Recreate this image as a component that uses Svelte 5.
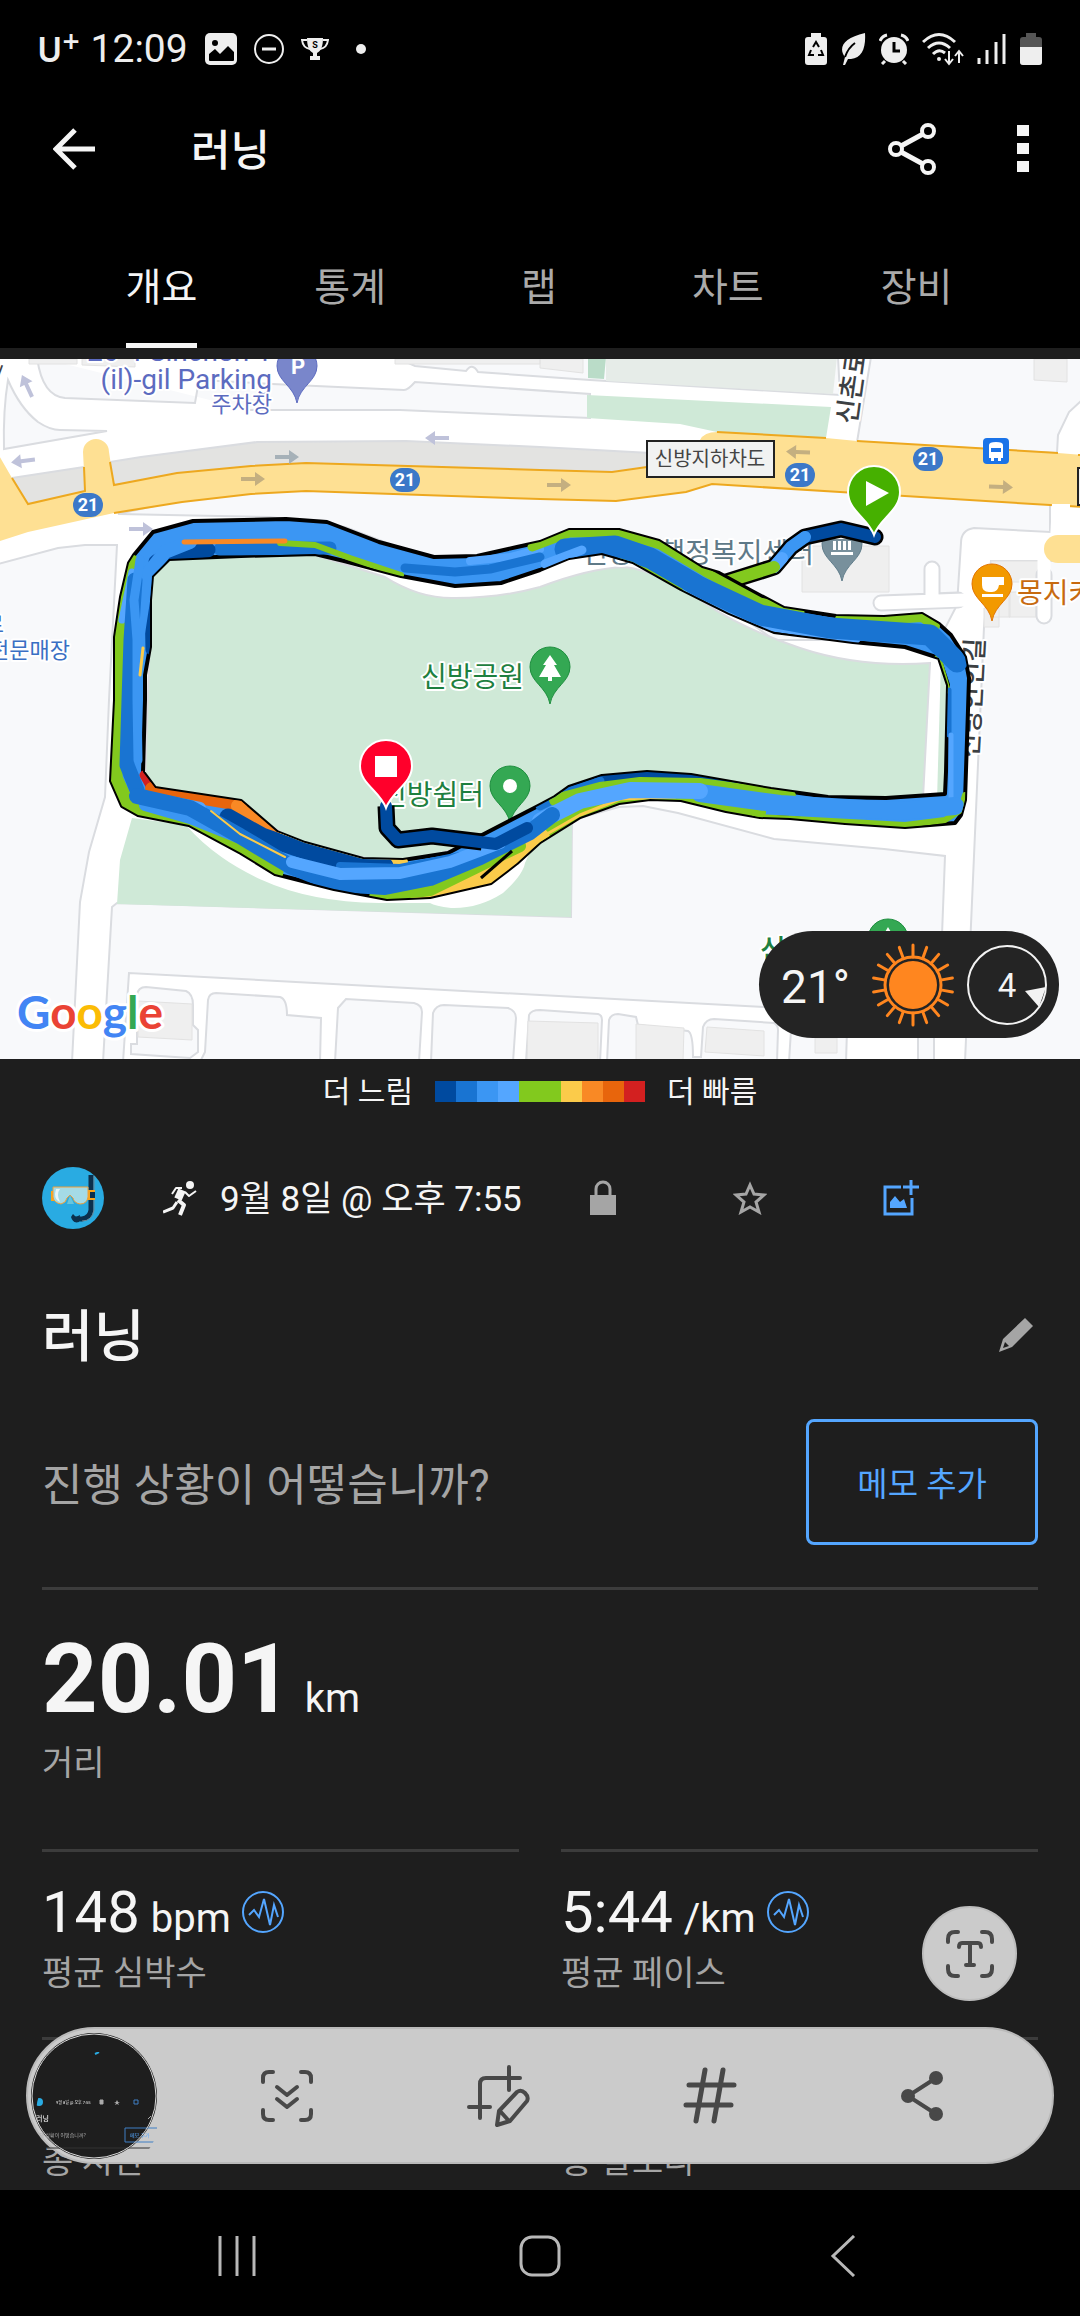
<script>
  const tabs = ['개요', '통계', '랩', '차트', '장비'];
  let active = '개요';

  const paceColors = ['#004a9f', '#1974d2', '#3b96f3', '#54a6ff', '#82c91e', '#82c91e', '#fbcb4a', '#f98925', '#e8650c', '#d32020'];

  const stats = [
    { value: '148', unit: 'bpm', label: '평균 심박수' },
    { value: '5:44', unit: '/km', label: '평균 페이스' },
    { label: '총 시간' },
    { label: '총 칼로리' }
  ];

  const rays = Array.from({ length: 18 }, (_, i) => i * 20);

  const shields = [[88, 505], [405, 480], [800, 475], [928, 459]];

  const arrows = [
    { x: 27, y: 386, r: -115, c: '#bfc2da' },
    { x: 23, y: 461, r: 173, c: '#bfc2da' },
    { x: 141, y: 529, r: 0, c: '#bfc2da' },
    { x: 437, y: 438, r: 180, c: '#bfc2da' },
    { x: 287, y: 457, r: 0, c: '#a6b1b8' },
    { x: 253, y: 479, r: 0, c: '#c4af80' },
    { x: 559, y: 485, r: 0, c: '#c4af80' },
    { x: 798, y: 452, r: 182, c: '#c4af80' },
    { x: 1001, y: 487, r: 2, c: '#c4af80' }
  ];

  const loop =
    'M153 532L193 521 286 519 327 522 379 542 434 557 477 556 517 547 540 542 569 530 619 530 659 541 702 568 719 573 750 590 784 608 836 616 884 617 922 614 939 624 951 635 965 657 969 678 968 710 965 800 961 815 955 823 905 827 845 823 790 818 760 817 726 811 681 800 650 799 619 803 580 817 540 842 517 863 491 883 430 897 387 899 334 889 275 874 241 853 189 825 138 815 122 806 111 781 115 700 115 637 121 597 129 563 134 555Z' +
    'M152 576L169 559 241 556 315 554 344 561 401 576 455 586 501 583 540 570 569 558 602 553 633 562 681 589 729 613 774 632 822 638 853 642 905 647 939 658 948 685 946 772 945 794 886 798 828 797 771 789 691 775 647 772 602 776 569 787 555 797 540 805 482 835 448 853 403 860 363 859 305 843 277 832 241 801 155 788 143 772 145 700 145 675 150 647 150 600Z';

  // pace segments painted inside the loop: [colour, width, points]
  const segments = [
    ['#82c91e', 17, '131,563 119,640 119,700 114,778 126,804 140,811 189,822 275,872'],
    ['#004a9f', 9, '156,570 149,600 150,650'],
    ['#1974d2', 13, '220,549 330,548'],
    ['#004a9f', 15, '156,562 170,553 208,550'],
    ['#82c91e', 6, '280,543 315,545 350,558 401,575'],
    ['#3b96f3', 14, '190,542 165,552 147,575 137,640 134,700'],
    ['#f98925', 5, '184,542 285,541'],
    ['#54a6ff', 7, '132,572 122,620'],
    ['#1974d2', 15, '135,580 131,640 129,700 127,765 137,790'],
    ['#3b96f3', 9, '140,560 134,600 137,640 137,700 138,760'],
    ['#fbcb4a', 3, '143,648 140,675'],
    ['#54a6ff', 8, '470,561 510,557 540,549'],
    ['#1974d2', 9, '405,568 455,572 490,569 540,557'],
    ['#82c91e', 9, '532,547 569,533 619,533 660,545 705,572 760,602 800,612'],
    ['#82c91e', 13, '625,558 684,587'],
    ['#54a6ff', 12, '688,592 770,625 855,638'],
    ['#82c91e', 10, '840,619 890,619 922,617 935,626'],
    ['#82c91e', 7, '938,658 947,690'],
    ['#1974d2', 21, '565,549 615,546 650,558 700,587 760,615 830,628 930,635 957,662'],
    ['#54a6ff', 9, '545,564 582,550'],
    ['#1974d2', 5, '949,690 949,735'],
    ['#54a6ff', 5, '951,735 951,800'],
    ['#004a9f', 13, '600,780 647,775 691,779 740,790'],
    ['#1974d2', 9, '540,806 570,791 600,781'],
    ['#82c91e', 12, '555,800 600,788 640,783 700,784 790,796'],
    ['#82c91e', 12, '530,842 580,812 620,798 690,797 740,809 760,812'],
    ['#82c91e', 6, '755,817 905,825 945,820 961,810 965,795'],
    ['#fbcb4a', 3, '540,838 580,815 620,799 675,797'],
    ['#3b96f3', 18, '700,793 780,804 900,811 955,806'],
    ['#54a6ff', 16, '540,821 580,801 630,790 700,791'],
    ['#d32020', 9, '144,775 152,789'],
    ['#e8650c', 14, '152,789 240,804'],
    ['#f98925', 14, '238,806 282,835'],
    ['#fbcb4a', 10, '282,836 330,852 403,862'],
    ['#fbcb4a', 20, '420,895 490,876 540,838'],
    ['#82c91e', 12, '375,897 430,890 475,868 520,846'],
    ['#54a6ff', 12, '160,800 200,808'],
    ['#004a9f', 17, '228,817 262,836 320,856 385,866'],
    ['#1974d2', 8, '340,866 400,868 460,856'],
    ['#3b96f3', 12, '145,805 190,818 240,838'],
    ['#1974d2', 16, '137,796 190,808 240,836 290,866 335,884 385,887 430,878 480,857 530,832 552,815'],
    ['#54a6ff', 12, '292,862 340,874 400,873 450,862 500,843'],
    ['#fbcb4a', 2, '211,811 240,834 285,857']
  ];
</script>

{#snippet pulse()}
  <svg class="pulse" viewBox="0 0 42 42" fill="none" stroke="#54a6ff" aria-hidden="true">
    <circle cx="21" cy="21" r="20" stroke-width="2" />
    <path d="M7 24l5-5 5 7 5-18 6 26 4-20 4 12" stroke-width="2" />
  </svg>
{/snippet}

{#snippet pin(x, y, fill, edge)}
  <path transform="translate({x} {y})" d="M0 37C-3 20-20 15-20 0A20 20 0 0 1 20 0C20 15 3 20 0 37Z" {fill} stroke={edge} stroke-width="1" />
{/snippet}

<div class="screen">
  <header>
    <div class="status">
      <div class="status-left">
        <span class="carrier">U<sup>+</sup></span>
        <time>12:09</time>
        <svg width="32" height="32" viewBox="0 0 32 32" aria-hidden="true">
          <rect width="32" height="32" rx="5" fill="#eee" />
          <path d="M4 27v-6l6-5 5 5 8-8 6 6v8q0 1-1 1H5q-1 0-1-1z" fill="#000" />
          <circle cx="10" cy="10" r="3" fill="#000" />
        </svg>
        <svg width="30" height="30" viewBox="0 0 30 30" fill="none" stroke="#eee" stroke-width="2" aria-hidden="true">
          <circle cx="15" cy="15" r="14" /><path d="M8 15h14" stroke-width="3" />
        </svg>
        <svg width="28" height="24" viewBox="0 0 28 24" aria-hidden="true">
          <path d="M6 1h16c0 8-2 13-6 15v3h3v4H9v-4h3v-3C8 14 6 9 6 1z" fill="#eee" />
          <path d="M6 3H1q1 8 8 9M22 3h5q-1 8-8 9" fill="none" stroke="#eee" stroke-width="2" />
          <text x="14" y="11" text-anchor="middle" font-size="9" font-weight="700" fill="#000">S</text>
        </svg>
        <svg class="dot" width="10" height="10" viewBox="0 0 10 10" aria-hidden="true"><circle cx="5" cy="5" r="5" fill="#eee" /></svg>
      </div>
      <div class="status-right">
        <svg width="22" height="34" viewBox="0 0 22 34" aria-hidden="true">
          <path d="M6 1h10v4h3q3 0 3 3v22q0 3-3 3H3q-3 0-3-3V8q0-3 3-3h3z" fill="#eee" />
          <path d="M8 15l3-5 3 5M16 18l2 5h-5M9 23H4l2-5" fill="none" stroke="#000" stroke-width="2" />
        </svg>
        <svg width="26" height="34" viewBox="0 0 26 34" aria-hidden="true">
          <path d="M25 1c1 15-3 25-14 26H8l-3 6H3l2-8C-2 16 3 6 25 1z" fill="#eee" />
          <path d="M5 25q3-9 10-14" fill="none" stroke="#000" stroke-width="2" />
        </svg>
        <svg width="30" height="32" viewBox="0 0 30 32" aria-hidden="true">
          <circle cx="15" cy="17" r="13" fill="#eee" />
          <path d="M15 9v9h6" fill="none" stroke="#000" stroke-width="3" />
          <path d="M1 8q2-5 7-6M29 8q-2-5-7-6M6 28l-3 3M24 28l3 3" fill="none" stroke="#eee" stroke-width="3" />
        </svg>
        <svg width="42" height="34" viewBox="0 0 42 34" fill="none" stroke="#eee" stroke-width="3" aria-hidden="true">
          <path d="M1 10Q17-5 33 10M6 16q11-10 22 0M11 22q6-6 12-1" />
          <circle cx="17" cy="27" r="2" fill="#eee" stroke="none" />
          <path d="M27 19v12M23 27l4 5 4-5M37 31V20M33 24l4-5 4 5" stroke-width="2" />
        </svg>
        <svg width="30" height="32" viewBox="0 0 30 32" stroke="#eee" stroke-width="3" aria-hidden="true">
          <path d="M2 31v-6M10 31V17M19 31V9M27 31V1" />
        </svg>
        <svg width="22" height="34" viewBox="0 0 22 34" aria-hidden="true">
          <path d="M6 1h10v4h3q3 0 3 3v22q0 3-3 3H3q-3 0-3-3V8q0-3 3-3h3z" fill="#555" />
          <path d="M0 15h22v15q0 3-3 3H3q-3 0-3-3z" fill="#eee" />
        </svg>
      </div>
    </div>

    <div class="appbar">
      <button class="icon" aria-label="뒤로">
        <svg width="42" height="42" viewBox="0 0 42 42" fill="none" stroke="#f5f5f5" stroke-width="5"><path d="M42 21H4M22 2L3 21l19 19" /></svg>
      </button>
      <h1>러닝</h1>
      <button class="icon" aria-label="공유">
        <svg width="50" height="54" viewBox="0 0 50 54" fill="none" stroke="#f5f5f5" stroke-width="4">
          <circle cx="41" cy="9" r="6" /><circle cx="9" cy="27" r="6" /><circle cx="41" cy="45" r="6" />
          <path d="M14 24l22-12M14 30l22 12" stroke-width="5" />
        </svg>
      </button>
      <button class="icon" aria-label="더보기">
        <svg width="12" height="48" viewBox="0 0 12 48" fill="#f5f5f5"><path d="M0 0h12v11H0zM0 18h12v11H0zM0 36h12v11H0z" /></svg>
      </button>
    </div>

    <nav class="tabs">
      {#each tabs as tab}
        <button class:active={tab === active} on:click={() => (active = tab)}>{tab}</button>
      {/each}
    </nav>
  </header>

  <main>
    <section class="map">
      <svg class="canvas" viewBox="0 359 1080 700" role="img" aria-label="경로 지도">
        <defs><clipPath id="loop"><path d={loop} clip-rule="evenodd" /></clipPath></defs>
        <rect y="359" width="1080" height="700" fill="#fff" />

        <g fill="#f8f9fb" stroke="#dadce0" stroke-width="2">
          <path d="M-2 564L58 548 85 545 117 545 109 700 105 797 89 852 80 902 72 1062H-2Z" />
          <path d="M112 907L117 903 571 917 572 820 619 807 643 806 678 813 774 839 884 849 945 856 939 1014 764 1007 540 995 129 973 123 1062H103Z" />
          <path d="M118 514L270 480H1050V532L974 528Q961 530 961 543L957 605 939 640H774L705 590 620 550H569L477 560 434 558 395 546 345 527 270 517Z" />
          <path d="M991 561H1082V1062H965L984 627Z" />
          <path d="M871 357L857 442 1057 453 1058 435 1069 412 1082 400V357Z" />
          <path d="M37 357Q42 396 65 398L195 403 199 380 272 384 404 390Q408 390 415 382L590 394V418L540 416 400 410H250" />
          <path d="M395 357L415 366 466 371Q472 362 478 372L590 380 840 395 838 357Z" />
          <path d="M8 380Q20 408 38 422 50 430 60 430L107 431 4 449Q3 410 8 380Z" />
          <path d="M131 1054V1044L137 1044V995Q138 987 146 987L186 991Q193 994 193 1005V1025L198 1030V1052L190 1058Z" />
          <path d="M200 1062L205 1052 208 1000Q209 993 216 993L280 997Q287 999 287 1015L321 1018 320 1062Z" />
          <path d="M335 1062L338 1008 346 999 414 1003Q422 1005 422 1012L419 1062Z" />
          <path d="M431 1062L433 1013Q436 1005 444 1005L508 1008Q516 1011 516 1018L513 1062Z" />
          <path d="M526 1062L529 1015Q531 1010 540 1010L598 1014Q602 1015 602 1020L600 1062Z" />
          <path d="M607 1062L609 1020Q611 1014 618 1014L636 1017 638 1025 688 1031Q693 1033 693 1057H701L703 1027Q706 1019 714 1019L774 1023Q778 1025 778 1030L777 1062Z" />
          <path d="M789 1062L791 1030H847L846 1062ZM918 1062V1020H934V1062Z" />
        </g>
        <path d="M606 357H837L833 394 606 381Z" fill="#e6ece8" />
        <path d="M588 357H606L604 379 588 378Z" fill="#badcc8" />
        <path d="M587 395L831 407 826 438 717 432 680 424 587 418Z" fill="#cfe9d7" />

        <g fill="#efefef" stroke="#e2e2e2">
          <path d="M29 359H77V364H29ZM82 359H135V367L82 365ZM395 359H540V364H395ZM540 359H583V373L540 368ZM1034 359H1067V382L1034 380Z" />
          <path d="M802 546H889V592H802ZM991 561H1042V582H1010V617H991V600ZM1009 592H1036V617H1009ZM984 608H999V627H984Z" />
          <path d="M138 1001L192 1004V1040L138 1037ZM528 1021L598 1023V1062H527ZM636 1024L684 1028 683 1062H636ZM707 1027L764 1031V1056L705 1052ZM815 1038H837V1053H815Z" />
        </g>
        <g fill="none" stroke-linecap="round">
          <path d="M932 569V600M881 603L958 600M1044 575V616" stroke="#dadce0" stroke-width="17" />
          <path d="M932 569V600M881 603L965 600M1044 560V616" stroke="#fff" stroke-width="13" />
        </g>

        <!-- park -->
        <path d="M152 572L170 555H315L385 577Q420 599 455 598 500 598 540 587 590 568 625 567 660 572 700 600T800 648 930 663L923 798H828L690 780H600L482 840 403 865 300 845 240 805 145 785Z" fill="#cfe9d7" stroke="#dadce0" stroke-width="2" />
        <path d="M941 660H950V800H937Z" fill="#cfe9d7" />
        <path d="M132 818L120 860 117 904 571 917 572 822 540 830 525 863Q523 875 503 893 478 909 451 908 435 906 430 903L379 903Q310 902 262 880T186 825Z" fill="#cfe9d7" />

        <!-- highway -->
        <path d="M12 478L84 467 110 462 141 457 257 442 406 441 540 447 650 453V480H300L114 490 28 506Z" fill="#e3e3e1" stroke="#dadce0" stroke-width="2" />
        <path d="M-3 452L12 478 28 504 85 491 83 452A13 13 0 0 1 109 452L114 485 177 473 251 466 306 463 540 470 612 472 647 467 700 440Q704 432 717 432L826 438 857 441 1058 453 1083 455V507L1050 505 840 492 712 484 686 492 616 501 540 499 306 491 251 494 182 502 114 513 28 532-3 542Z" fill="#fee093" />
        <path d="M12 478L28 504 85 491 84 467M110 462L114 485 177 473 251 466 306 463 540 470 612 472 647 467M717 432L826 438M857 441L1058 453M1078 455H1083M1083 507L1050 505 840 492 712 484 686 492 616 501 540 499 306 491 251 494 182 502 114 513" fill="none" stroke="#eda81f" stroke-width="2" />
        <path d="M1052 504H1070V540H1050Z" fill="#fff" />
        <path d="M1082 535H1058A14 14 0 0 0 1058 563H1082Z" fill="#fee093" />

        {#each arrows as a}
          <path transform="translate({a.x} {a.y}) rotate({a.r})" d="M-12-2H2V-7L12 0 2 7V2H-12Z" fill={a.c} />
        {/each}
        {#each shields as [x, y]}
          <rect x={x - 15} y={y - 12} width="30" height="24" rx="12" fill="#3c78c8" />
          <text {x} y={y + 6} class="shield">21</text>
        {/each}
        <rect x="1078" y="468" width="20" height="37" fill="#f1f1f1" stroke="#222" stroke-width="2" />
        <rect x="647" y="441" width="127" height="36" fill="#f1f2f2" stroke="#222" stroke-width="2" />
        <text x="710" y="466" text-anchor="middle" font-size="20" fill="#444">신방지하차도</text>
        <rect x="983" y="438" width="26" height="26" rx="4" fill="#1a73e8" />
        <path d="M989 445q0-3 7-3t7 3v13h-2v3h-3v-3h-4v3h-3v-3h-2z" fill="#fff" />
        <path d="M991 448h10v4h-10z" fill="#1a73e8" />

        <g class="labels">
          <text x="272" y="361" text-anchor="end" font-size="28" fill="#5c6bc0">26-4 Sinchon 1</text>
          <text x="272" y="389" text-anchor="end" font-size="28" fill="#5c6bc0">(il)-gil Parking</text>
          <text x="272" y="412" text-anchor="end" font-size="22" fill="#5c6bc0">주차장</text>
          <text x="4" y="632" text-anchor="end" font-size="22" fill="#3a6fc4">로</text>
          <text x="70" y="658" text-anchor="end" font-size="22" fill="#3a6fc4">전문매장</text>
          <text x="524" y="687" text-anchor="end" font-size="28" fill="#1e8040">신방공원</text>
          <text x="484" y="805" text-anchor="end" font-size="28" fill="#1e8040">신방쉼터</text>
          <text x="814" y="563" text-anchor="end" font-size="28" fill="#5f7a88">신방동행정복지센터</text>
          <text x="1017" y="603" font-size="28" fill="#c76a10">몽지카페</text>
          <text x="760" y="960" font-size="28" font-weight="500" fill="#1e8040">신</text>
          <text transform="translate(856 425) rotate(-82)" font-size="27" font-weight="500" fill="#3c4043">신촌로</text>
          <text transform="translate(978 758) rotate(-87)" font-size="26" font-weight="500" fill="#3c4043">신방안인길</text>
          <text transform="translate(-6 385) rotate(-70)" font-size="26" fill="#3c4043">길</text>
        </g>

        {@render pin(297, 366, '#7986cb', '#5c6bc0')}
        <text x="298" y="374" class="pin-letter">P</text>
        {@render pin(550, 667, '#34a853', '#1e8e3e')}
        <path d="M550 655l7 10h-3l7 12h-9v4h-4v-4h-9l7-12h-3z" fill="#fff" />
        {@render pin(510, 786, '#34a853', '#1e8e3e')}
        <circle cx="510" cy="786" r="7" fill="#fff" />
        {@render pin(842, 544, '#78909c', '#607d8b')}
        <path d="M832 539l10-6 10 6zM833 541h3v9h-3zM838 541h3v9h-3zM843 541h3v9h-3zM848 541h3v9h-3zM831 552h22v3h-22z" fill="#fff" />
        {@render pin(992, 584, '#f29900', '#e37400')}
        <path d="M982 577h22v8h-5q-1 7-7 7h-3q-7 0-7-7zM982 594h21v3h-21z" fill="#fff" />
        {@render pin(888, 939, '#34a853', '#1e8e3e')}
        <path d="M888 927l7 12h-14z" fill="#fff" />

        <!-- run -->
        <g fill="none" stroke-linejoin="round" stroke-linecap="round">
          <polyline points="726,582 774,567 791,547 805,537 841,529 875,537" stroke="#000" stroke-width="17" />
          <polyline points="805,537 841,529 875,537" stroke="#004a9f" stroke-width="12" />
          <polyline points="774,567 791,547 805,537" stroke="#3b96f3" stroke-width="12" />
          <polyline points="774,567 782,558" stroke="#54a6ff" stroke-width="12" />
          <polyline points="726,582 774,567" stroke="#82c91e" stroke-width="12" />
        </g>
        <path d={loop} fill="#3b96f3" fill-rule="evenodd" stroke="#000" stroke-width="4" stroke-linejoin="round" />
        <g clip-path="url(#loop)" fill="none" stroke-linejoin="round" stroke-linecap="round">
          {#each segments as [color, width, points]}
            <polyline {points} stroke={color} stroke-width={width} />
          {/each}
        </g>
        <path d="M481 878L512 851" stroke="#000" stroke-width="3" />
        <g fill="none" stroke-linejoin="round">
          <polyline points="386,806 387,828 398,840 432,836 482,842" stroke="#000" stroke-width="17" />
          <polyline points="386,806 387,828 398,840 432,836 496,844 527,828" stroke="#004a9f" stroke-width="12" stroke-linecap="round" />
        </g>

        <path d="M874 535C868 518 848 511 848 492A26 26 0 0 1 900 492C900 511 880 518 874 535Z" fill="#46b000" stroke="#fff" stroke-width="2" />
        <path d="M866 481L889 493 866 506Z" fill="#fff" />
        <path d="M386 808C380 791 360 784 360 766A26 26 0 0 1 412 766C412 784 392 791 386 808Z" fill="#ff002b" stroke="#fff" stroke-width="2" />
        <path d="M375 756H397V777H375Z" fill="#fff" />

        <text x="17" y="1029" class="google"><tspan fill="#4285f4">G</tspan><tspan fill="#ea4335">o</tspan><tspan fill="#fbbc05">o</tspan><tspan fill="#4285f4">g</tspan><tspan fill="#34a853">l</tspan><tspan fill="#ea4335">e</tspan></text>
      </svg>

      <div class="weather">
        <span class="temp">21°</span>
        <svg width="84" height="84" viewBox="-42 -42 84 84" aria-hidden="true">
          <circle r="24" fill="#ff861f" />
          <circle r="28" fill="none" stroke="#ff861f" stroke-width="3" />
          {#each rays as r}<path d="M0-28V-40" stroke="#ff861f" stroke-width="3" stroke-linecap="round" transform="rotate({r})" />{/each}
        </svg>
        <svg width="82" height="82" viewBox="-41 -41 82 82" aria-hidden="true">
          <circle r="39" fill="none" stroke="#f3f3f3" stroke-width="2" />
          <path d="M18 6L39 2 32 22Z" fill="#f3f3f3" />
          <text x="0" y="12" text-anchor="middle" font-size="33" fill="#f3f3f3">4</text>
        </svg>
      </div>
    </section>

    <div class="legend">
      <span>더 느림</span>
      <div class="scale">{#each paceColors as c}<i style="background: {c}"></i>{/each}</div>
      <span>더 빠름</span>
    </div>

    <div class="body">
      <div class="meta">
        <svg class="avatar" viewBox="0 0 62 62" aria-hidden="true">
          <circle cx="31" cy="31" r="31" fill="#29abe2" />
          <path d="M49 8V43Q48 51 40 52H32" fill="none" stroke="#0b304d" stroke-width="5" />
          <path d="M29 50l2-3 3 3 4-2-1 7q-6 2-8-5z" fill="#0b304d" />
          <path d="M52 9V43Q50 54 40 54" fill="none" stroke="#6d8795" stroke-width="1" />
          <path d="M9 24h4v10h-4zM45 23h8v10h-8z" fill="#f7a51b" />
          <path d="M48 25h5v6h-5z" fill="#0b304d" />
          <path d="M11 20H46V30Q45 37 38 37 32 36 31 31L28 28 25 31Q24 36 19 37 12 36 11 30Z" fill="#a5dbe6" stroke="#ef9f38" stroke-width="1" />
          <path d="M14 22H18Q14 27 18 35 13 33 13 27Z" fill="#e5f5f8" />
          <path d="M28 28l4 9h-7z" fill="#67c5dd" />
        </svg>
        <svg class="runner" width="34" height="36" viewBox="0 0 34 36" fill="none" stroke="#f5f5f5" stroke-linejoin="round" aria-hidden="true">
          <circle cx="27" cy="5" r="4" fill="#f5f5f5" stroke="none" />
          <path d="M19 10L15 19" stroke-width="8" />
          <path d="M19 8H13L9 14M22 12l4 4 7-5" stroke-width="2" />
          <path d="M15 20l6 5-4 10" stroke-width="4" />
          <path d="M14 22l-4 6-10 4" stroke-width="3" />
        </svg>
        <span class="date">9월 8일 @ 오후 7:55</span>
        <div class="actions">
          <button class="icon" aria-label="공개 범위">
            <svg width="28" height="36" viewBox="0 0 28 36"><path d="M1 15h26v20H1z" fill="#a5a5a5" /><path d="M7 16V9a7 7 0 0 1 14 0v7" fill="none" stroke="#a5a5a5" stroke-width="3" /></svg>
          </button>
          <button class="icon" aria-label="즐겨찾기">
            <svg width="34" height="34" viewBox="0 0 34 34" fill="none" stroke="#a5a5a5" stroke-width="3"><path d="M17 4l4 9 10 1-8 7 3 10-9-5-9 5 3-10-8-7 10-1z" /></svg>
          </button>
          <button class="icon" aria-label="사진 추가">
            <svg width="36" height="36" viewBox="0 0 36 36" fill="none" stroke="#54a6ff" stroke-width="3"><path d="M18 7H2v27h27V18M28 0v15M20 7h16" /><path d="M7 28v-6l5-6 5 6 4-3 3 9z" fill="#54a6ff" stroke="none" /></svg>
          </button>
        </div>
      </div>

      <div class="title">
        <h2>러닝</h2>
        <button class="icon" aria-label="이름 편집">
          <svg width="36" height="36" viewBox="0 0 36 36" fill="#a5a5a5"><path d="M27 1l8 8-21 21L1 35l4-13zM7 25l-2 6 6-2z" fill-rule="evenodd" /></svg>
        </button>
      </div>

      <div class="note">
        <p>진행 상황이 어떻습니까?</p>
        <button>메모 추가</button>
      </div>

      <div class="distance">
        <div class="value"><strong>20.01</strong><span>km</span></div>
        <div class="label">거리</div>
      </div>

      <div class="stats">
        {#each stats as s}
          <div class="stat">
            <div class="value">
              {#if s.value}{s.value}<span>{s.unit}</span>{@render pulse()}{/if}
            </div>
            <div class="label">{s.label}</div>
          </div>
        {/each}
      </div>
    </div>
  </main>

  <nav class="system">
    <button aria-label="최근 앱"><svg width="42" height="42" viewBox="0 0 42 42" stroke="#b8b8b8" stroke-width="3"><path d="M4 1v40M21 1v40M38 1v40" /></svg></button>
    <button aria-label="홈"><svg width="42" height="42" viewBox="0 0 42 42" fill="none" stroke="#b8b8b8" stroke-width="3"><rect x="2" y="2" width="38" height="38" rx="11" /></svg></button>
    <button aria-label="뒤로"><svg width="42" height="42" viewBox="0 0 42 42" fill="none" stroke="#b8b8b8" stroke-width="3"><path d="M32 1L11 21l21 20" /></svg></button>
  </nav>

  <button class="extract" aria-label="텍스트 추출">
    <svg width="50" height="50" viewBox="0 0 50 50" fill="none" stroke="#484848" stroke-width="4" stroke-linecap="round">
      <path d="M3 13V10Q3 3 10 3h3M37 3h3q7 0 7 7v3M47 37v3q0 7-7 7h-3M13 47h-3q-7 0-7-7v-3" />
      <path d="M14 18q0-4 3-4h16q3 0 3 4M25 14v22M21 36h8" />
    </svg>
  </button>

  <div class="capture">
    <svg class="thumb" viewBox="0 0 126 126" aria-hidden="true">
      <circle cx="63" cy="63" r="63" fill="#1e1e1e" />
      <g clip-path="circle(62px at 63px 63px)">
        <path d="M64 21l4-2" stroke="#29abe2" stroke-width="2" />
        <circle cx="8" cy="69" r="4" fill="#29abe2" />
        <text x="25" y="71" font-size="4" fill="#eee">9월 8일 @ 오후 7:55</text>
        <text x="5" y="88" font-size="7" font-weight="500" fill="#eee">러닝</text>
        <text x="4" y="104" font-size="5" fill="#aaa">진행 상황이 어떻습니까?</text>
        <path d="M69 67h3v4h-3zM117 86l3-3" fill="#aaa" stroke="#aaa" />
        <path d="M86 67l1 2h2l-2 1 1 2-2-1-2 1 1-2-2-1h2z" fill="#aaa" />
        <path d="M103 67h4v4h-4zM94 95h36v14H94z" fill="none" stroke="#3f7fc4" />
        <text x="99" y="104" font-size="5" fill="#54a6ff">메모 추가</text>
        <path d="M5 115h116" stroke="#333" />
      </g>
      <circle cx="63" cy="63" r="62" fill="none" stroke="#dcdcdc" stroke-width="1" />
    </svg>
    <button aria-label="스크롤 캡처">
      <svg width="54" height="54" viewBox="0 0 54 54" fill="none" stroke="#484848" stroke-width="4" stroke-linecap="round" stroke-linejoin="round">
        <path d="M3 13V9Q3 3 9 3h4M41 3h4q6 0 6 6v4M51 41v4q0 6-6 6h-4M13 51H9q-6 0-6-6v-4" />
        <path d="M17 18l10 8 10-8M17 30l10 8 10-8" />
      </svg>
    </button>
    <button aria-label="자르기 및 편집">
      <svg width="64" height="62" viewBox="0 0 64 62" fill="none" stroke="#484848" stroke-width="4" stroke-linecap="round" stroke-linejoin="round">
        <path d="M42 2v23M53 13H19q-6 0-6 6v34M2 42h21" />
        <path d="M30 60l2-14 18-19q4-3 8 1t2 8L43 56zM33 46l9 10" stroke-width="4" />
      </svg>
    </button>
    <button aria-label="태그 추가">
      <svg width="54" height="58" viewBox="0 0 54 58" fill="none" stroke="#484848" stroke-width="5" stroke-linecap="round">
        <path d="M22 3l-9 51M40 3L31 54M6 18h45M3 38h45" />
      </svg>
    </button>
    <button aria-label="공유">
      <svg width="46" height="52" viewBox="0 0 46 52" fill="#484848">
        <circle cx="37" cy="8" r="7" /><circle cx="9" cy="26" r="7" /><circle cx="37" cy="44" r="7" />
        <path d="M37 8L9 26l28 18" fill="none" stroke="#484848" stroke-width="4" />
      </svg>
    </button>
  </div>
</div>

<style>
  :global(body) {
    margin: 0;
    background: #000;
  }
  .screen {
    position: relative;
    display: flex;
    flex-direction: column;
    height: 100vh;
    overflow: hidden;
    background: #000;
    color: #f5f5f5;
    font-family: Roboto, 'Noto Sans CJK KR', sans-serif;
  }
  svg {
    display: block;
    flex: none;
  }
  h1, h2, p {
    margin: 0;
    font-weight: 500;
  }
  button {
    padding: 0;
    border: 0;
    background: none;
    color: inherit;
    font: inherit;
  }
  .status {
    display: flex;
    align-items: center;
    justify-content: space-between;
    height: 97px;
    padding: 0 38px 0 37px;
  }
  .status-left {
    display: flex;
    align-items: center;
    gap: 17px;
    color: #eee;
  }
  .carrier {
    display: flex;
    margin-right: -6px;
    font-family: 'Noto Sans', sans-serif;
    font-size: 34px;
    font-weight: 600;
    line-height: 40px;
  }
  .carrier sup {
    font-size: 30px;
    line-height: 24px;
  }
  time {
    font-size: 39px;
    line-height: 48px;
  }
  .dot {
    margin-left: 10px;
  }
  .status-right {
    display: flex;
    align-items: center;
    gap: 13px;
  }
  .appbar {
    display: flex;
    align-items: center;
    height: 103px;
    padding: 0 51px 0 53px;
  }
  .appbar h1 {
    flex: 1;
    margin-left: 96px;
    padding-top: 4px;
    font-size: 43px;
    line-height: 60px;
  }
  .appbar .icon + .icon {
    margin-left: 80px;
  }
  .tabs {
    display: grid;
    grid-template-columns: repeat(5, 1fr);
    justify-items: center;
    padding: 64px 69px 0 67px;
  }
  .tabs button {
    padding-bottom: 31px;
    border-bottom: 5px solid transparent;
    color: #aaa;
    font-size: 39px;
    line-height: 48px;
  }
  .tabs .active {
    border-color: #f5f5f5;
    color: #f5f5f5;
  }
  main {
    flex: 1;
    min-height: 0;
    padding-top: 11px;
    overflow-y: auto;
    scrollbar-width: none;
    background: #1e1e1e;
  }
  .map {
    position: relative;
  }
  .canvas {
    width: 100%;
  }
  .labels text {
    stroke: #fff;
    stroke-width: 4px;
    stroke-linejoin: round;
    paint-order: stroke;
  }
  .shield {
    font-size: 18px;
    font-weight: 700;
    fill: #fff;
    text-anchor: middle;
  }
  .pin-letter {
    font-size: 22px;
    font-weight: 700;
    fill: #fff;
    text-anchor: middle;
  }
  .google {
    font-family: Lato, sans-serif;
    font-size: 46px;
    font-weight: 700;
    stroke: #fff;
    stroke-width: 6px;
    stroke-linejoin: round;
    paint-order: stroke;
  }
  .weather {
    position: absolute;
    right: 21px;
    bottom: 21px;
    display: flex;
    align-items: center;
    gap: 11px;
    height: 107px;
    padding: 0 11px 0 22px;
    border-radius: 54px;
    background: #242424;
  }
  .temp {
    margin-right: 10px;
    padding-top: 4px;
    font-size: 46px;
    line-height: 54px;
  }
  .legend {
    display: flex;
    align-items: center;
    justify-content: center;
    gap: 22px;
    height: 65px;
    font-size: 30px;
    line-height: 40px;
  }
  .scale {
    display: flex;
    width: 210px;
    height: 21px;
  }
  .scale i {
    flex: 1;
  }
  .body {
    padding: 33px 42px 0;
  }
  .meta {
    display: flex;
    align-items: center;
    height: 81px;
  }
  .avatar {
    width: 62px;
  }
  .runner {
    margin-left: 59px;
  }
  .date {
    margin-left: 23px;
    padding-top: 4px;
    font-size: 35px;
    line-height: 48px;
  }
  .actions {
    display: flex;
    align-items: center;
    gap: 116px;
    margin-left: 67px;
  }
  .title {
    display: flex;
    align-items: center;
    justify-content: space-between;
    height: 80px;
    margin-top: 57px;
    padding-right: 4px;
  }
  .title h2 {
    padding-top: 4px;
    font-size: 56px;
    line-height: 80px;
  }
  .note {
    display: flex;
    align-items: center;
    justify-content: space-between;
    margin-top: 44px;
    padding-bottom: 42px;
    border-bottom: 3px solid #3c3c3c;
  }
  .note p {
    color: #a5a5a5;
    font-size: 44px;
    font-weight: 400;
  }
  .note button {
    height: 126px;
    padding: 0 48px;
    border: 3px solid #54a6ff;
    border-radius: 8px;
    color: #54a6ff;
    font-size: 33px;
  }
  .distance {
    padding: 39px 0 66px;
  }
  .distance .value {
    display: flex;
    align-items: baseline;
    gap: 12px;
    height: 100px;
    font-size: 40px;
    line-height: 100px;
  }
  .distance strong {
    font-size: 97px;
    font-weight: 700;
  }
  .distance .label {
    margin-top: 14px;
  }
  .label {
    color: #a5a5a5;
    font-size: 34px;
    line-height: 40px;
  }
  .stats {
    display: grid;
    grid-template-columns: 1fr 1fr;
    column-gap: 42px;
  }
  .stat {
    padding: 30px 0 44px;
    border-top: 3px solid #3c3c3c;
  }
  .stat .value {
    display: flex;
    align-items: baseline;
    gap: 11px;
    height: 60px;
    font-size: 58px;
    line-height: 60px;
  }
  .stat .value span {
    font-size: 40px;
  }
  .stat .label {
    margin-top: 11px;
  }
  .pulse {
    align-self: center;
    width: 42px;
  }
  .system {
    display: flex;
    justify-content: space-around;
    align-items: center;
    box-sizing: border-box;
    height: 126px;
    padding: 6px 86px 0;
    background: #000;
  }
  .system button {
    display: flex;
    padding: 12px 24px;
  }
  .extract {
    position: absolute;
    right: 63px;
    bottom: 315px;
    display: flex;
    align-items: center;
    justify-content: center;
    width: 95px;
    height: 95px;
    border: 2px solid #bdbdbd;
    border-radius: 50%;
    background: #cbcbcb;
  }
  .capture {
    position: absolute;
    right: 26px;
    bottom: 152px;
    left: 26px;
    box-sizing: border-box;
    display: flex;
    align-items: center;
    height: 137px;
    padding: 0 24px 0 3px;
    border: 2px solid #bababa;
    border-radius: 69px;
    background: #cbcbcb;
  }
  .capture button {
    flex: 1;
    display: flex;
    justify-content: center;
  }
  .thumb {
    width: 126px;
    margin-right: 24px;
  }
</style>
